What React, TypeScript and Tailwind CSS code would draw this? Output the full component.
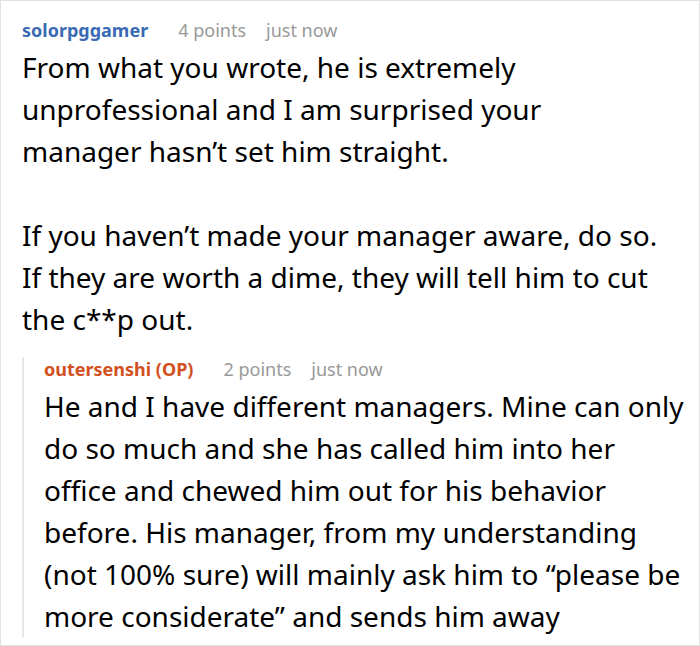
import React from "react";

const Meta: React.FC<{ name: string; color: string; points: string }> = ({ name, color, points }) => (
  <div className="flex items-baseline text-[18px] leading-[24px]">
    <span className={`font-bold ${color}`}>{name}</span>
    <span className="ml-[30px] text-[#999999]">{points}</span>
    <span className="ml-[20px] text-[#999999]">just now</span>
  </div>
);

export default function App() {
  return (
    <div
      className="w-[700px] h-[646px] overflow-hidden bg-white border border-[#e2e2e2] text-black"
      style={{ fontFamily: '"Noto Sans", "Open Sans", sans-serif' }}
    >
      <div className="pl-[21px] pt-[17px] pr-[10px]">
        <Meta name="solorpggamer" color="text-[#3a6ab3]" points="4 points" />
        <div className="text-[28px] leading-[42px] mt-[4px]">
          <p>
            From what you wrote, he is extremely
            <br />
            unprofessional and I am surprised your
            <br />
            manager hasn’t set him straight.
          </p>
          <p className="mt-[42px]">
            If you haven’t made your manager aware, do so.
            <br />
            If they are worth a dime, they will tell him to cut
            <br />
            the c**p out.
          </p>
        </div>
        <div className="mt-[17px] border-l-2 border-[#e6e6e6] pl-[20px]">
          <Meta name="outersenshi (OP)" color="text-[#d2501e]" points="2 points" />
          <p className="text-[28px] leading-[42px] mt-[4px] whitespace-nowrap">
            He and I have different managers. Mine can only
            <br />
            do so much and she has called him into her
            <br />
            office and chewed him out for his behavior
            <br />
            before. His manager, from my understanding
            <br />
            (not 100% sure) will mainly ask him to “please be
            <br />
            more considerate” and sends him away
          </p>
        </div>
      </div>
    </div>
  );
}
